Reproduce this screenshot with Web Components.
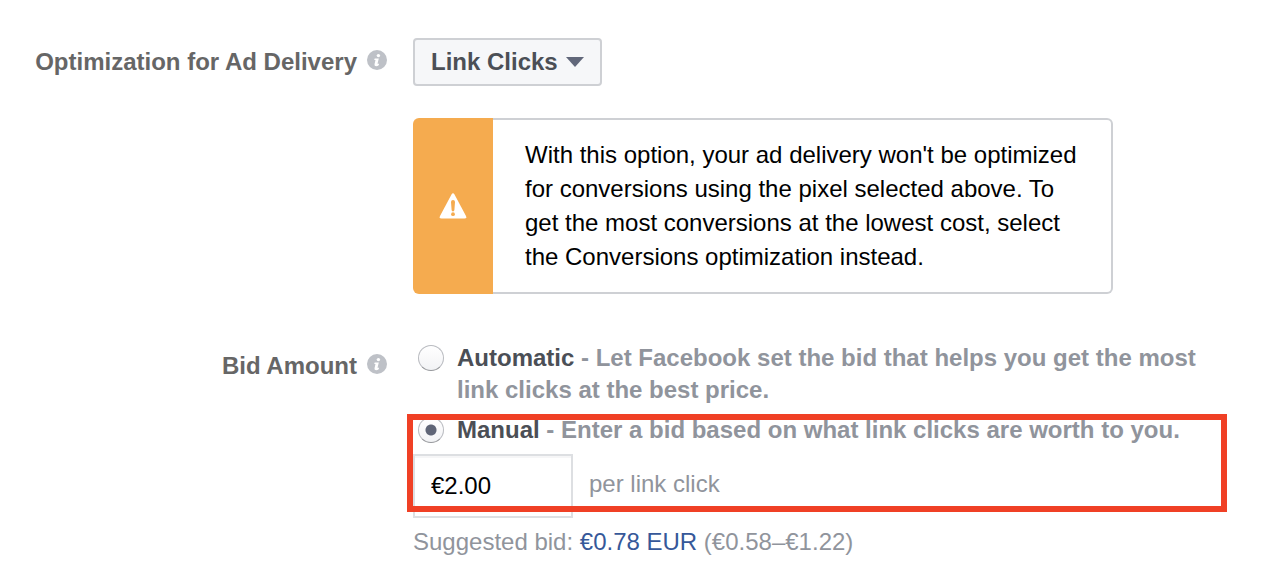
<!DOCTYPE html>
<html lang="en">
<head>
<meta charset="utf-8">
<meta name="viewport" content="width=device-width, initial-scale=1">
<title>Bid settings</title>
<style>
  body { margin: 0; background: #fff; font: 24px/32px "Liberation Sans", Arial, sans-serif; color: #000; }
</style>
</head>
<body>
<bid-settings></bid-settings>

<script>
class BaseElement extends HTMLElement {
  constructor() {
    super();
    this.attachShadow({ mode: "open" }).innerHTML = this.constructor.markup;
  }
}

class InfoIcon extends BaseElement {
  static markup = `
    <style>
      :host { display: block; flex: none; width: 20px; height: 20px; }
      svg { display: block; }
    </style>
    <svg width="20" height="20" viewBox="0 0 20 20" role="img" aria-label="More information">
      <circle cx="10" cy="10" r="10" fill="#bec1c7"/>
      <circle cx="11.4" cy="5.6" r="1.7" fill="#fff"/>
      <path d="M7.7 8.4h4.1l-1.3 5.3h1.6l-.4 1.5q-1.1 1-2.6 1-1.9 0-1.6-1.9l1-4.2H7.2z" fill="#fff"/>
    </svg>`;
}

class FieldRow extends BaseElement {
  static markup = `
    <style>
      :host { display: grid; grid-template-columns: 387px minmax(0, 1fr); column-gap: 26px; }
      .label { display: flex; align-items: center; justify-content: flex-end; gap: 10px; height: 48px;
               font-weight: bold; color: #666; white-space: nowrap; }
      info-icon { margin-bottom: 4px; }
    </style>
    <div class="label"><slot name="label"></slot><info-icon></info-icon></div>
    <div><slot></slot></div>`;
}

class SelectBox extends BaseElement {
  static markup = `
    <style>
      :host { display: inline-grid; align-items: center; vertical-align: top; }
      ::slotted(select) { grid-area: 1 / 1; appearance: none; height: 48px; margin: 0; padding: 0 42px 0 16px;
        font: bold 24px/32px "Liberation Sans", Arial, sans-serif; color: #4b4f56;
        background: #f6f7f9; border: 2px solid #ced0d4; border-radius: 4px; }
      svg { grid-area: 1 / 1; justify-self: end; margin-right: 18px; pointer-events: none; z-index: 1; }
    </style>
    <slot></slot>
    <svg width="18" height="10" viewBox="0 0 18 10" aria-hidden="true"><path d="M0 0h18L9 10z" fill="#61677a"/></svg>`;
}

class WarningBox extends BaseElement {
  static markup = `
    <style>
      :host { display: flex; max-width: 700px; }
      .mark { flex: none; width: 80px; display: grid; place-items: center; background: #f5ab4f;
              border-radius: 6px 0 0 6px; }
      .text { flex: 1; padding: 18px 22px 18px 32px; line-height: 34px; border: 2px solid #ced0d4;
              border-left: 0; border-radius: 0 6px 6px 0; }
    </style>
    <div class="mark">
      <svg width="28" height="26" viewBox="0 0 28 26" role="img" aria-label="Warning">
        <path d="M12.5 1.4Q14-.8 15.5 1.4L27 23Q28 25.5 25.5 25.5h-23Q0 25.5 1 23z" fill="#fff"/>
        <path d="M12 9q0-2 2-2t2 2l-.6 8q-.1 1.4-1.4 1.4T12.6 17z" fill="#f5ab4f"/>
        <circle cx="14" cy="21.2" r="1.9" fill="#f5ab4f"/>
      </svg>
    </div>
    <div class="text"><slot></slot></div>`;
}

class RadioOption extends BaseElement {
  static markup = `
    <style>
      :host { display: grid; grid-template-columns: 26px minmax(0, 1fr); column-gap: 13px; padding-left: 5px;
              font-weight: bold; color: #90949c; }
      ::slotted(input) { appearance: none; box-sizing: border-box; width: 26px; height: 26px; margin: 3px 0;
        border: 1px solid #b9bbc0; border-bottom-color: #96989c; border-radius: 50%;
        background: linear-gradient(#fff, #f2f3f5); }
      ::slotted(input:checked) { background: radial-gradient(circle, #5f6577 5px, transparent 6px), linear-gradient(#fff, #f2f3f5); }
    </style>
    <slot name="control"></slot>
    <div><slot></slot></div>`;
}

class HighlightFrame extends BaseElement {
  static markup = `
    <style>
      :host { display: block; position: relative; }
      .frame { position: absolute; inset: 0 -6px 6px; border: 6px solid #f04025; pointer-events: none; }
    </style>
    <slot></slot>
    <div class="frame"></div>`;
}

class BidSettings extends BaseElement {
  static markup = `
    <style>
      :host { display: block; padding: 38px 57px 26px 0; }
      form { display: grid; row-gap: 48px; }
      warning-box { margin-top: 32px; }
      highlight-frame { margin-top: 8px; }
      strong { color: #4b4f56; }
      .amount { display: flex; align-items: center; gap: 16px; margin-top: 8px; color: #90949c; }
      .amount label { margin-bottom: 4px; }
      .amount input { box-sizing: border-box; width: 160px; height: 64px; margin: 0; padding: 0 16px;
        font: inherit; color: #000; background: #fff; border: 2px solid #dddfe2; border-radius: 0;
        box-shadow: inset 0 2px 0 #f6f6f7; }
      .hint { margin: 8px 0 0; color: #90949c; }
      a { color: #365899; text-decoration: none; }
    </style>
    <form>
      <field-row>
        <label slot="label" for="goal">Optimization for Ad Delivery</label>
        <select-box><select id="goal"><option>Link Clicks</option></select></select-box>
        <warning-box>With this option, your ad delivery won't be optimized for conversions using the pixel selected above. To get the most conversions at the lowest cost, select the Conversions optimization instead.</warning-box>
      </field-row>
      <field-row role="radiogroup" aria-labelledby="bid">
        <span slot="label" id="bid">Bid Amount</span>
        <radio-option>
          <input slot="control" type="radio" name="bid" id="auto">
          <label for="auto"><strong>Automatic</strong> - Let Facebook set the bid that helps you get the most link clicks at the best price.</label>
        </radio-option>
        <highlight-frame>
          <radio-option>
            <input slot="control" type="radio" name="bid" id="manual" checked>
            <label for="manual"><strong>Manual</strong> - Enter a bid based on what link clicks are worth to you.</label>
          </radio-option>
          <div class="amount">
            <input type="text" id="amount" value="€2.00">
            <label for="amount">per link click</label>
          </div>
        </highlight-frame>
        <p class="hint">Suggested bid: <a href="#amount">€0.78 EUR</a> (€0.58–€1.22)</p>
      </field-row>
    </form>`;
}

customElements.define("info-icon", InfoIcon);
customElements.define("field-row", FieldRow);
customElements.define("select-box", SelectBox);
customElements.define("warning-box", WarningBox);
customElements.define("radio-option", RadioOption);
customElements.define("highlight-frame", HighlightFrame);
customElements.define("bid-settings", BidSettings);
</script>
</body>
</html>
